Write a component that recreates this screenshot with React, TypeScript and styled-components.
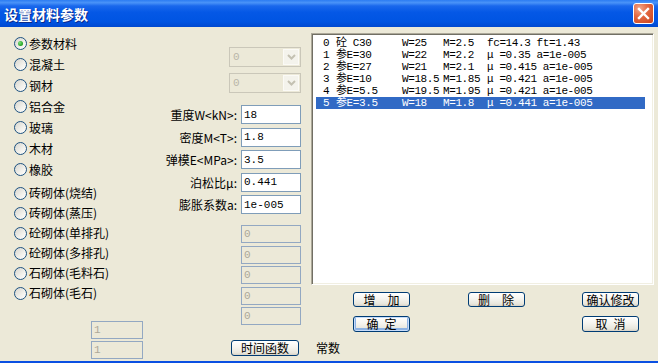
import styled, { createGlobalStyle } from 'styled-components';

const GlobalStyle = createGlobalStyle`
  html, body {
    margin: 0;
    padding: 0;
  }
  body {
    width: 658px;
    height: 363px;
    overflow: hidden;
    background: #ECE9D8;
    font-family: "Noto Sans CJK SC", "Liberation Sans", sans-serif;
    font-size: 12px;
    color: #000;
  }
  * {
    box-sizing: border-box;
  }
`;

const mono = `"Liberation Mono", "Noto Sans CJK SC", monospace`;

const Window = styled.div`
  width: 658px;
  height: 363px;
  display: flex;
  flex-direction: column;
  background: #ECE9D8;
  border-bottom: 2px solid #0A50E2;
`;

const TitleBar = styled.div`
  height: 27px;
  flex: none;
  display: flex;
  align-items: center;
  justify-content: space-between;
  padding: 0 4px;
  background: linear-gradient(
    to bottom,
    #2C7CF2 0%,
    #4A93F8 10%,
    #1A68EC 22%,
    #0558E6 45%,
    #0054E2 80%,
    #0049D0 100%
  );
`;

const Title = styled.span`
  color: #fff;
  font-weight: bold;
  font-size: 14px;
  line-height: 16px;
  text-shadow: 1px 1px 0 #0A2A8A;
`;

const CloseButton = styled.div`
  width: 21px;
  height: 21px;
  border: 1px solid #fff;
  border-radius: 3px;
  background: radial-gradient(circle at 30% 25%, #F2A88C 0%, #E46A43 40%, #C9411B 100%);
  display: flex;
  align-items: center;
  justify-content: center;
`;

const Body = styled.div`
  flex: 1;
  display: flex;
`;

const LeftCol = styled.div`
  width: 150px;
  padding: 6px 0 0 14px;
  display: flex;
  flex-direction: column;
`;

const MidCol = styled.div`
  width: 151px;
  padding-top: 20px;
  display: flex;
  flex-direction: column;
`;

const RightCol = styled.div`
  width: 343px;
  margin-left: 10px;
  padding-top: 6px;
  display: flex;
  flex-direction: column;
`;

const RadioGroup = styled.div<{ $gap?: number }>`
  display: flex;
  flex-direction: column;
  margin-top: ${(p) => p.$gap ?? 0}px;
`;

const RadioRow = styled.label<{ $h: number }>`
  height: ${(p) => p.$h}px;
  display: flex;
  align-items: center;
  gap: 2px;
  white-space: nowrap;
  line-height: 14px;
`;

const RadioDot = styled.span<{ $checked?: boolean }>`
  width: 13px;
  height: 13px;
  flex: none;
  border-radius: 50%;
  border: 1px solid #1C5180;
  background: linear-gradient(135deg, #D6D5CE 0%, #F2F1EC 60%, #FFFFFF 100%);
  display: flex;
  align-items: center;
  justify-content: center;

  &::after {
    content: '';
    width: 5px;
    height: 5px;
    border-radius: 50%;
    background: ${(p) =>
      p.$checked ? 'radial-gradient(circle at 35% 35%, #7BE07B 0%, #21A121 70%)' : 'transparent'};
  }
`;

const Field = styled.input<{ $w: number; $h: number }>`
  width: ${(p) => p.$w}px;
  height: ${(p) => p.$h}px;
  border: 1px solid #7F9DB9;
  background: #fff;
  padding: 0 2px;
  margin: 0;
  font: 11px/1 ${mono};
  color: #000;
  outline: none;

  &:disabled {
    background: #ECE9D8;
    border-color: #93A8C2;
    color: #ACA899;
  }
`;

const SmallStack = styled.div`
  display: flex;
  flex-direction: column;
  gap: 2px;
  margin: 18px 0 0 77px;
`;

const ComboStack = styled.div`
  display: flex;
  flex-direction: column;
  align-items: flex-end;
  gap: 6px;
`;

const Combo = styled.div`
  width: 72px;
  height: 20px;
  border: 1px solid #CAC7B9;
  padding: 1px;
  display: flex;
  align-items: center;
`;

const ComboText = styled.span`
  flex: 1;
  padding-left: 2px;
  font: 11px/1 ${mono};
  color: #B9B6A8;
`;

const ComboArrow = styled.span`
  width: 16px;
  height: 16px;
  background: #F4F3EC;
  border: 1px solid #FBFAF6;
  display: flex;
  align-items: center;
  justify-content: center;
`;

const FieldGrid = styled.div`
  display: grid;
  grid-template-columns: 1fr 60px;
  grid-auto-rows: 19px;
  column-gap: 4px;
  row-gap: 3.5px;
  margin-top: 12px;
`;

const FieldLabel = styled.span`
  text-align: right;
  line-height: 19px;
  white-space: nowrap;
`;

const DisabledStack = styled.div`
  display: flex;
  flex-direction: column;
  align-items: flex-end;
  gap: 2.5px;
  margin-top: 11px;
`;

const Button = styled.button<{ $w?: number; $h?: number; $focused?: boolean }>`
  width: ${(p) => p.$w ?? 57}px;
  height: ${(p) => p.$h ?? 15}px;
  padding: 0;
  margin: 0;
  border: 1px solid #003C74;
  border-radius: 3px;
  background: linear-gradient(to bottom, #FFFFFF 0%, #F5F4EF 45%, #E8E6DC 85%, #D6D0C5 100%);
  font: 12px/12px "Noto Sans CJK SC", sans-serif;
  color: #000;
  white-space: nowrap;
  box-shadow: ${(p) => (p.$focused ? 'inset 0 0 0 1px #C6DCFB, inset 0 -1px 0 2px #8DB2E3' : 'none')};
`;

const TimeButton = styled(Button)`
  align-self: flex-end;
  margin: 15px 2px 0 0;
`;

const ListBox = styled.div`
  height: 252px;
  background: #fff;
  border: 1px solid;
  border-color: #ACA899 #FFFFFF #FFFFFF #ACA899;
  box-shadow: inset 1px 1px 0 #716F64, inset -1px -1px 0 #F1EFE2;
  padding: 3px 8px 0 4px;
`;

const ListRow = styled.div<{ $selected?: boolean }>`
  display: grid;
  grid-template-columns: 13px 66px 41px 44px 1fr;
  height: 12px;
  padding-left: 7px;
  font: 11px/12px ${mono};
  letter-spacing: -0.4px;
  white-space: pre;
  background: ${(p) => (p.$selected ? '#316AC5' : 'transparent')};
  color: ${(p) => (p.$selected ? '#fff' : '#000')};
`;

const ButtonRow = styled.div<{ $mt: number }>`
  display: grid;
  grid-template-columns: repeat(3, 57px);
  justify-content: space-between;
  padding: 0 15px 0 42px;
  margin-top: ${(p) => p.$mt}px;
`;

const Caption = styled.span`
  margin-top: 9px;
  padding-left: 5px;
  line-height: 14px;
`;

const radiosA = ['参数材料', '混凝土', '钢材', '铝合金', '玻璃', '木材', '橡胶'];
const radiosB = ['砖砌体(烧结)', '砖砌体(蒸压)', '砼砌体(单排孔)', '砼砌体(多排孔)', '石砌体(毛料石)', '石砌体(毛石)'];

const fields = [
  { label: '重度W<kN>:', value: '18' },
  { label: '密度M<T>:', value: '1.8' },
  { label: '弹模E<MPa>:', value: '3.5' },
  { label: '泊松比μ:', value: '0.441' },
  { label: '膨胀系数a:', value: '1e-005' },
];

const rows = [
  ['0', '砼 C30', 'W=25', 'M=2.5', 'fc=14.3 ft=1.43'],
  ['1', '参E=30', 'W=22', 'M=2.2', 'μ =0.35 a=1e-005'],
  ['2', '参E=27', 'W=21', 'M=2.1', 'μ =0.415 a=1e-005'],
  ['3', '参E=10', 'W=18.5', 'M=1.85', 'μ =0.421 a=1e-005'],
  ['4', '参E=5.5', 'W=19.5', 'M=1.95', 'μ =0.421 a=1e-005'],
  ['5', '参E=3.5', 'W=18', 'M=1.8', 'μ =0.441 a=1e-005'],
];

const Chevron = () => (
  <svg width="9" height="6" viewBox="0 0 9 6">
    <path d="M1 1 L4.5 4.5 L8 1" fill="none" stroke="#C4C1B2" strokeWidth="2" />
  </svg>
);

export default function App() {
  return (
    <>
      <GlobalStyle />
      <Window>
        <TitleBar>
          <Title>设置材料参数</Title>
          <CloseButton>
            <svg width="13" height="13" viewBox="0 0 13 13">
              <path d="M2 2 L11 11 M11 2 L2 11" stroke="#fff" strokeWidth="2.4" strokeLinecap="square" />
            </svg>
          </CloseButton>
        </TitleBar>
        <Body>
          <LeftCol>
            <RadioGroup>
              {radiosA.map((r, i) => (
                <RadioRow key={r} $h={21}>
                  <RadioDot $checked={i === 0} />
                  {r}
                </RadioRow>
              ))}
            </RadioGroup>
            <RadioGroup $gap={3}>
              {radiosB.map((r) => (
                <RadioRow key={r} $h={20}>
                  <RadioDot />
                  {r}
                </RadioRow>
              ))}
            </RadioGroup>
            <SmallStack>
              <Field $w={52} $h={18} disabled defaultValue="1" />
              <Field $w={52} $h={18} disabled defaultValue="1" />
            </SmallStack>
          </LeftCol>

          <MidCol>
            <ComboStack>
              {[0, 1].map((k) => (
                <Combo key={k}>
                  <ComboText>0</ComboText>
                  <ComboArrow>
                    <Chevron />
                  </ComboArrow>
                </Combo>
              ))}
            </ComboStack>
            <FieldGrid>
              {fields.flatMap((f) => [
                <FieldLabel key={f.label}>{f.label}</FieldLabel>,
                <Field key={f.label + 'v'} $w={60} $h={19} readOnly defaultValue={f.value} />,
              ])}
            </FieldGrid>
            <DisabledStack>
              {[0, 1, 2, 3, 4].map((k) => (
                <Field key={k} $w={60} $h={18} disabled defaultValue="0" />
              ))}
            </DisabledStack>
            <TimeButton $w={68} $h={16}>时间函数</TimeButton>
          </MidCol>

          <RightCol>
            <ListBox>
              {rows.map((r, i) => (
                <ListRow key={r[0]} $selected={i === 5}>
                  {r.map((c, j) => (
                    <span key={j}>{c}</span>
                  ))}
                </ListRow>
              ))}
            </ListBox>
            <ButtonRow $mt={7}>
              <Button>增{'\u3000'}加</Button>
              <Button>删{'\u3000'}除</Button>
              <Button>确认修改</Button>
            </ButtonRow>
            <ButtonRow $mt={9}>
              <Button $h={16} $focused>确{'\u2002'}定</Button>
              <span />
              <Button $h={16}>取{'\u2002'}消</Button>
            </ButtonRow>
            <Caption>常数</Caption>
          </RightCol>
        </Body>
      </Window>
    </>
  );
}
